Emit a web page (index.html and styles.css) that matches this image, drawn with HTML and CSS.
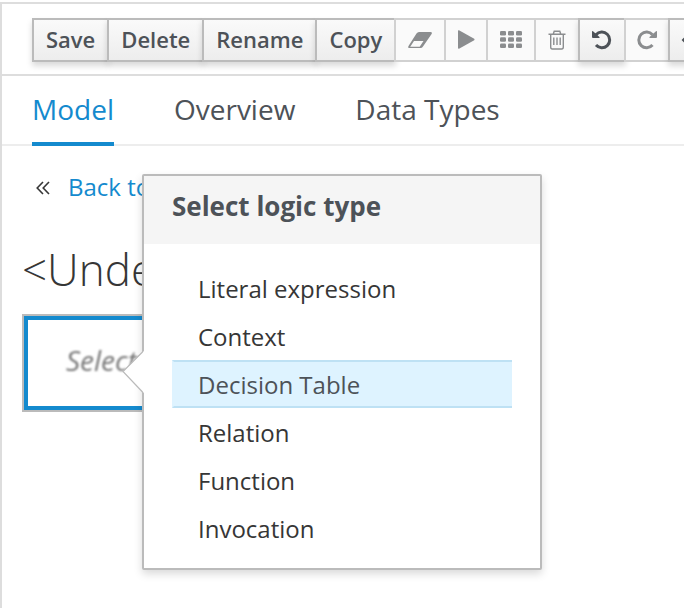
FILE: index.html
```html
<!DOCTYPE html>
<html lang="en">
<head>
<meta charset="utf-8">
<meta name="viewport" content="width=device-width, initial-scale=1">
<title>Decision model editor</title>
<link rel="stylesheet" href="styles.css">
</head>
<body>
<div class="editor">
  <div class="toolbar" role="toolbar" aria-label="Editor actions">
    <button class="btn" type="button">Save</button>
    <button class="btn" type="button">Delete</button>
    <button class="btn" type="button">Rename</button>
    <button class="btn" type="button">Copy</button>
    <button class="btn" type="button" disabled aria-label="Clear">
      <svg width="24" height="20" viewBox="0 0 24 20"><path fill="currentColor" fill-rule="evenodd" d="M11 3H22.5Q24.600 3 23.600 5L15 17.500Q14 19 12.500 19H1.500Q-.5 19 .5 17L8.500 4.500Q9.500 3 11 3ZM6 12L2.200 17.800H11.700L15.500 12Z"/></svg>
    </button>
    <button class="btn" type="button" disabled aria-label="Run">
      <svg width="16" height="20" viewBox="0 0 16 20"><path fill="currentColor" d="M0 2Q0 1 1 1.300L16.200 9.800Q17 10.500 16.200 11.200L1 19.800Q0 20 0 19Z"/></svg>
    </button>
    <button class="btn" type="button" disabled aria-label="Grid">
      <svg width="22" height="20" viewBox="0 0 22 20"><g fill="currentColor"><rect y="2" width="6" height="4.600" rx="1.300"/><rect x="8" y="2" width="6" height="4.600" rx="1.300"/><rect x="16" y="2" width="6" height="4.600" rx="1.300"/><rect y="8.200" width="6" height="4.600" rx="1.300"/><rect x="8" y="8.200" width="6" height="4.600" rx="1.300"/><rect x="16" y="8.200" width="6" height="4.600" rx="1.300"/><rect y="14.400" width="6" height="4.600" rx="1.300"/><rect x="8" y="14.400" width="6" height="4.600" rx="1.300"/><rect x="16" y="14.400" width="6" height="4.600" rx="1.300"/></g></svg>
    </button>
    <button class="btn" type="button" disabled aria-label="Remove">
      <svg width="18" height="20" viewBox="0 0 18 20"><g fill="none" stroke="currentColor" stroke-width="1.400"><path d="M.5 5.200H17.500M5.200 5.200L6.200 2.200H11.800L12.800 5.200M2.700 5.200V18Q2.700 20 4.300 20H13.700Q15.300 20 15.300 18V5.200"/><path d="M5.800 8.500V16M9 8.500V16M12.200 8.500V16"/></g></svg>
    </button>
    <button class="btn" type="button" aria-label="Undo">
      <svg width="20" height="20" viewBox="0 0 20 20"><path fill="none" stroke="currentColor" stroke-width="3" d="M4 5.800A7.800 7.800 0 1 1 4 16"/><path fill="currentColor" d="M0 2.500Q0 1.500 1 2.200L7.500 8Q8 9 7 9H1Q0 9 0 8Z"/></svg>
    </button>
    <button class="btn" type="button" disabled aria-label="Redo">
      <svg width="18" height="20" viewBox="0 0 18 20"><path fill="none" stroke="currentColor" stroke-width="3" d="M14.500 5.800A7.800 7.800 0 1 0 14.500 16"/><path fill="currentColor" d="M19 2.500Q19 1.500 18 2.200L11.500 8Q11 9 12 9H18Q19 9 19 8Z"/></svg>
    </button>
    <button class="btn" type="button" aria-label="Previous">
      <svg width="20" height="20" viewBox="0 0 20 20"><path fill="none" stroke="currentColor" stroke-width="2" d="M20 11H1M8 4L1 11L8 18"/></svg>
    </button>
  </div>
  <nav class="tabs" aria-label="Editor views">
    <a class="tab tab-active" href="#model" aria-current="page">Model</a>
    <a class="tab" href="#overview">Overview</a>
    <a class="tab" href="#types">Data Types</a>
  </nav>
  <main class="content">
    <div class="back">
      <svg width="14" height="14" viewBox="0 0 14 14" aria-hidden="true"><path fill="none" stroke="currentColor" stroke-width="1.600" d="M7 2L1.200 8L7 14M13 2L7.200 8L13 14"/></svg>
      <a href="#back">Back to</a>
    </div>
    <h1 class="title">&lt;Unde</h1>
    <div class="expression">
      <div class="cell"><span>Select</span></div>
      <section class="popover" aria-labelledby="popover-title">
        <svg class="pointer" width="22" height="42" viewBox="0 0 22 42" aria-hidden="true"><path fill="#fff" d="M22 0L1 20.500L22 42Z"/><path fill="none" stroke="#bbb" stroke-width="1.200" d="M20.500 1L1 20.500L20.500 41"/></svg>
        <h2 class="popover-title" id="popover-title">Select logic type</h2>
        <ul class="types">
          <li><button class="type" type="button">Literal expression</button></li>
          <li><button class="type" type="button">Context</button></li>
          <li><button class="type type-active" type="button">Decision Table</button></li>
          <li><button class="type" type="button">Relation</button></li>
          <li><button class="type" type="button">Function</button></li>
          <li><button class="type" type="button">Invocation</button></li>
        </ul>
      </section>
    </div>
  </main>
</div>
</body>
</html>
```
FILE: styles.css
```css
* {
  box-sizing: border-box;
}

body {
  margin: 0;
  padding-top: 2px;
  overflow: hidden;
  background: #fff;
  color: #363636;
  font-family: "Open Sans", sans-serif;
  font-size: 24px;
}

a {
  color: #148ace;
  text-decoration: none;
}

button {
  font: inherit;
}

svg {
  display: block;
  flex: none;
  overflow: visible;
}

.editor {
  min-height: calc(100vh - 2px);
  border-top: 2px solid #ddd;
  border-left: 2px solid #ddd;
}

.toolbar {
  display: flex;
  padding: 14px 0 12px 30px;
  border-bottom: 2px solid #ddd;
  overflow: hidden;
}

.btn {
  display: flex;
  flex: none;
  align-items: center;
  height: 44px;
  padding: 0 12px 2px;
  border: 2px solid #bbb;
  background: linear-gradient(#fafafa, #ededed);
  box-shadow: 0 4px 6px rgba(3, 3, 3, 0.15);
  color: #4d5258;
  font-size: 22px;
  font-weight: 600;
}

.btn + .btn {
  margin-left: -2px;
}

.btn:disabled {
  border-color: #d1d1d1;
  background: #fafafa;
  box-shadow: none;
  color: #8b8d8f;
}

.tabs {
  display: flex;
  gap: 60px;
  padding-left: 30px;
  border-bottom: 2px solid #ededed;
}

.tab {
  height: 70px;
  margin-bottom: -2px;
  color: #4d5258;
  font-size: 28px;
  line-height: 66px;
}

.tab-active {
  border-bottom: 4px solid #148ace;
  color: #148ace;
}

.content {
  padding: 24px 20px;
}

.back {
  display: flex;
  align-items: center;
  gap: 18px;
  padding-left: 14px;
  line-height: 34px;
}

.title {
  margin: 34px 0 14px;
  font-size: 44px;
  font-weight: 300;
  line-height: 62px;
}

.expression {
  position: relative;
}

.cell {
  display: flex;
  align-items: center;
  width: 320px;
  height: 98px;
  padding: 0 42px 6px;
  border: 2px solid #bbb;
  box-shadow: inset 0 0 0 4px #148ace;
  color: #757575;
  font-size: 28px;
  font-style: italic;
  font-weight: 500;
}

.cell span {
  filter: blur(1px);
}

.popover {
  position: absolute;
  top: -140px;
  left: 120px;
  width: 400px;
  border: 2px solid #bbb;
  border-radius: 2px;
  background: #fff;
  box-shadow: 0 4px 8px rgba(3, 3, 3, 0.15);
}

.pointer {
  position: absolute;
  top: 175px;
  left: -22px;
}

.popover-title {
  margin: 0;
  padding: 0 28px 8px;
  background: #f5f5f5;
  color: #4d5258;
  font-size: 26px;
  font-weight: 700;
  line-height: 60px;
}

.types {
  margin: 0;
  padding: 20px 28px 16px;
  list-style: none;
}

.type {
  display: block;
  width: 100%;
  height: 48px;
  padding: 0 24px;
  border: 2px solid transparent;
  border-right: 0;
  background: transparent;
  color: #363636;
  text-align: left;
}

.type-active {
  border-color: #bee1f4;
  border-left-color: #def3ff;
  background: #def3ff;
  color: #4d5258;
}
```
